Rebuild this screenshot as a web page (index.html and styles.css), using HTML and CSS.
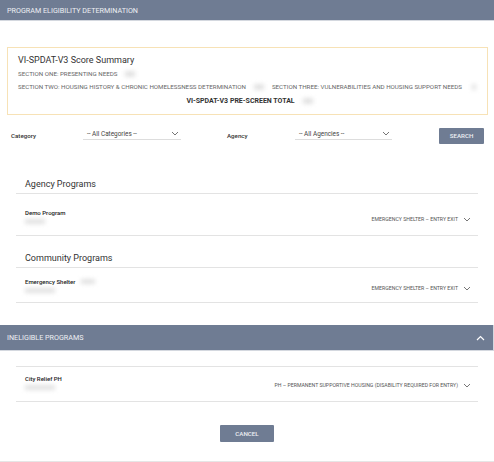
FILE: index.html
```html
<!DOCTYPE html>
<html lang="en">
<head>
    <meta charset="UTF-8">
    <meta name="viewport" content="width=device-width, initial-scale=1.0">
    <title>Program Eligibility Determination</title>
    <link rel="stylesheet" href="styles.css">
</head>
<body>
    <div class="page">
        <header class="bar">PROGRAM ELIGIBILITY DETERMINATION</header>

        <section class="summary">
            <h1>VI-SPDAT-V3 Score Summary</h1>
            <div class="summary-line">
                <span>SECTION ONE: PRESENTING NEEDS</span>
                <span class="blur blur-sm"></span>
            </div>
            <div class="summary-line">
                <span>SECTION TWO: HOUSING HISTORY &amp; CHRONIC HOMELESSNESS DETERMINATION</span>
                <span class="blur blur-sm"></span>
                <span class="gap"></span>
                <span>SECTION THREE: VULNERABILITIES AND HOUSING SUPPORT NEEDS</span>
                <span class="blur blur-xs"></span>
            </div>
            <div class="summary-total">
                <span>VI-SPDAT-V3 PRE-SCREEN TOTAL</span>
                <span class="blur blur-sm"></span>
            </div>
        </section>

        <div class="filters">
            <label class="filter-label">Category</label>
            <div class="select select-cat">
                <span>-- All Categories --</span>
                <svg width="8" height="5" viewBox="0 0 8 5"><path d="M1 1l3 3 3-3" fill="none" stroke="#666" stroke-width="0.9"/></svg>
            </div>
            <label class="filter-label filter-agency">Agency</label>
            <div class="select select-agency">
                <span>-- All Agencies --</span>
                <svg width="8" height="5" viewBox="0 0 8 5"><path d="M1 1l3 3 3-3" fill="none" stroke="#666" stroke-width="0.9"/></svg>
            </div>
            <button class="btn btn-search">SEARCH</button>
        </div>

        <section class="group">
            <h2>Agency Programs</h2>
            <div class="program">
                <div class="program-name">
                    <strong>Demo Program</strong>
                    <span class="blur blur-name"></span>
                </div>
                <div class="program-type">EMERGENCY SHELTER – ENTRY EXIT
                    <svg width="8" height="5" viewBox="0 0 8 5"><path d="M1 1l3 3 3-3" fill="none" stroke="#666" stroke-width="0.9"/></svg>
                </div>
            </div>
        </section>

        <section class="group group-community">
            <h2>Community Programs</h2>
            <div class="program program-tight">
                <div class="program-name">
                    <strong>Emergency Shelter <span class="blur blur-inline"></span></strong>
                    <span class="blur blur-name wide"></span>
                </div>
                <div class="program-type">EMERGENCY SHELTER – ENTRY EXIT
                    <svg width="8" height="5" viewBox="0 0 8 5"><path d="M1 1l3 3 3-3" fill="none" stroke="#666" stroke-width="0.9"/></svg>
                </div>
            </div>
        </section>

        <header class="bar bar-ineligible">
            <span>INELIGIBLE PROGRAMS</span>
            <svg width="9" height="6" viewBox="0 0 9 6"><path d="M1 5l3.5-3.5L8 5" fill="none" stroke="#fff" stroke-width="1.2"/></svg>
        </header>

        <section class="group group-ineligible">
            <div class="program program-tight">
                <div class="program-name">
                    <strong>City Relief PH</strong>
                    <span class="blur blur-name wide"></span>
                </div>
                <div class="program-type">PH – PERMANENT SUPPORTIVE HOUSING (DISABILITY REQUIRED FOR ENTRY)
                    <svg width="8" height="5" viewBox="0 0 8 5"><path d="M1 1l3 3 3-3" fill="none" stroke="#666" stroke-width="0.9"/></svg>
                </div>
            </div>
        </section>

        <div class="actions">
            <button class="btn btn-cancel">CANCEL</button>
        </div>
    </div>
</body>
</html>
```

FILE: styles.css
```css
body {
    margin: 0;
    font-family: Roboto, "Liberation Sans", Arial, sans-serif;
    color: #444;
    background: #fff;
}
.page {
    width: 494px;
    height: 462px;
    border-bottom: 1px solid #e6e6e6;
    box-sizing: border-box;
    overflow: hidden;
}
.bar {
    height: 21px;
    background-color: #6f7c93;
    color: #eef0f4;
    font-size: 7.2px;
    padding-left: 7px;
    display: flex;
    align-items: center;
    border-bottom: 1px solid #d4d8df;
    box-sizing: border-box;
}
.summary {
    margin: 26px 6px 0 7px;
    height: 68px;
    border: 1px solid #f7e2b6;
    box-sizing: border-box;
    padding: 7px 6px 0 10px;
}
.summary h1 {
    font-size: 9px;
    font-weight: 400;
    color: #333;
    margin: 0 0 1px 0;
    height: 11px;
    line-height: 11px;
}
.summary-line {
    display: flex;
    align-items: center;
    font-size: 6.2px;
    color: #666;
    height: 13px;
    white-space: nowrap;
}
.summary-line span {
    flex-shrink: 0;
}
.gap {
    width: 8px;
}
.summary-total {
    display: flex;
    justify-content: center;
    align-items: center;
    font-size: 7px;
    font-weight: 700;
    color: #333;
    margin-top: 4px;
    height: 8px;
}
.blur {
    display: inline-block;
    background: #e2e2e2;
    filter: blur(2px);
    height: 6px;
}
.blur-sm {
    width: 10px;
    margin-left: 8px;
}
.blur-xs {
    width: 4px;
    margin-left: 10px;
}
.blur-name {
    width: 20px;
    margin-top: 3px;
    height: 5px;
}
.blur-name.wide {
    width: 30px;
}
.blur-inline {
    width: 14px;
    height: 5px;
    margin-left: 6px;
}
.filters {
    display: flex;
    align-items: center;
    height: 18px;
    margin-top: 12px;
    padding-left: 11px;
}
.filter-label {
    font-size: 6.2px;
    font-weight: 500;
    color: #333;
    width: 72px;
}
.filter-agency {
    width: 68px;
    margin-left: 46px;
}
.select {
    display: flex;
    justify-content: space-between;
    align-items: center;
    border-bottom: 1px solid #ddd;
    font-size: 6.4px;
    color: #444;
    height: 12px;
    padding: 0 2px 0 4px;
    box-sizing: border-box;
    margin-top: -4px;
}
.select-cat {
    width: 98px;
}
.select-agency {
    width: 97px;
}
.btn {
    background-color: #6f7c93;
    color: #eef0f4;
    border: none;
    border-radius: 1px;
    font-family: inherit;
    font-size: 6.2px;
    font-weight: 500;
    cursor: pointer;
    padding: 0;
}
.btn-search {
    width: 45px;
    height: 16px;
    margin-left: 47px;
}
.group {
    margin: 34px 16px 0 16px;
}
.group h2 {
    font-size: 9px;
    font-weight: 400;
    color: #333;
    margin: 0;
    padding: 0 0 4px 9px;
    border-bottom: 1px solid #e3e3e3;
    height: 10px;
    line-height: 10px;
}
.group-community {
    margin-top: 17px;
}
.program {
    display: flex;
    justify-content: space-between;
    align-items: flex-start;
    padding: 15px 7px 0 9px;
    height: 42px;
    box-sizing: border-box;
    border-bottom: 1px solid #e3e3e3;
}
.program-tight {
    padding-top: 10px;
    height: 35px;
}
.program-name {
    display: flex;
    flex-direction: column;
    align-items: flex-start;
}
.program-name strong {
    font-size: 6px;
    font-weight: 500;
    color: #222;
    display: flex;
    align-items: center;
}
.program-type {
    font-size: 5.2px;
    color: #555;
    display: flex;
    align-items: center;
    gap: 5px;
    margin-top: 7px;
}
.bar-ineligible {
    margin-top: 22px;
    height: 26px;
    justify-content: space-between;
    padding-right: 8px;
    border-right: 1px solid #d4d8df;
}
.group-ineligible {
    margin-top: 15px;
    border-top: 1px solid #e3e3e3;
}
.group-ineligible .program {
    padding-top: 8px;
}
.actions {
    display: flex;
    justify-content: center;
    margin-top: 23px;
}
.btn-cancel {
    width: 54px;
    height: 17px;
}
```
